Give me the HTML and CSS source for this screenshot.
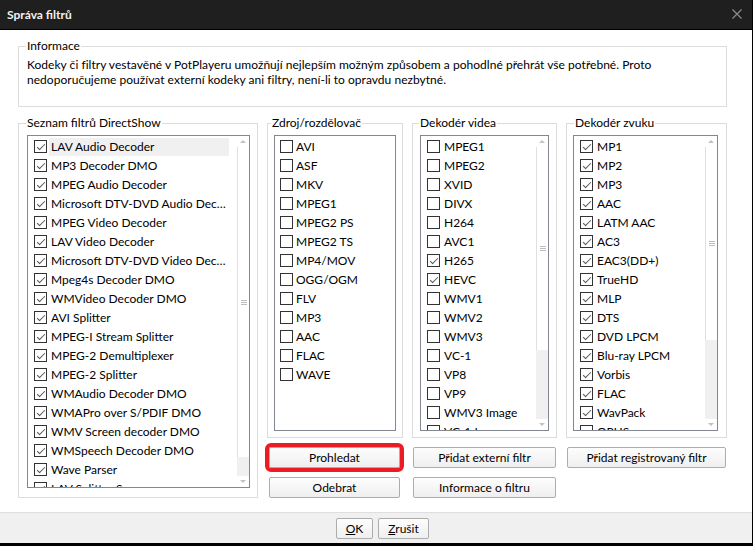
FILE: index.html
```html
<!DOCTYPE html>
<html lang="cs">
<head>
<meta charset="utf-8">
<title>Správa filtrů</title>
<link rel="stylesheet" href="styles.css">
</head>
<body>
<div class="window">
  <header class="titlebar">
    <span class="title">Správa filtrů</span>
    <svg class="close" width="10" height="10" viewBox="0 0 10 10"><path d="M0.5 0.5 L9.5 9.5 M9.5 0.5 L0.5 9.5" stroke="#8c8c8c" stroke-width="1.2" fill="none"/></svg>
  </header>
  <main class="content">
    <fieldset class="group info">
      <legend>Informace</legend>
      <p class="info-text">Kodeky či filtry vestavěné v PotPlayeru umožňují nejlepším možným způsobem a pohodlné přehrát vše potřebné. Proto<br>nedoporučujeme používat externí kodeky ani filtry, není-li to opravdu nezbytné.</p>
    </fieldset>

    <div class="main">
      <fieldset class="group ds">
        <legend>Seznam filtrů DirectShow</legend>
        <div class="listbox lb-ds">
          <ul class="items">
            <li class="sel"><span class="cb on"></span><span class="txt">LAV Audio Decoder</span></li>
            <li><span class="cb on"></span><span class="txt">MP3 Decoder DMO</span></li>
            <li><span class="cb on"></span><span class="txt">MPEG Audio Decoder</span></li>
            <li><span class="cb on"></span><span class="txt">Microsoft DTV-DVD Audio Decoder</span></li>
            <li><span class="cb on"></span><span class="txt">MPEG Video Decoder</span></li>
            <li><span class="cb on"></span><span class="txt">LAV Video Decoder</span></li>
            <li><span class="cb on"></span><span class="txt">Microsoft DTV-DVD Video Decoder</span></li>
            <li><span class="cb on"></span><span class="txt">Mpeg4s Decoder DMO</span></li>
            <li><span class="cb on"></span><span class="txt">WMVideo Decoder DMO</span></li>
            <li><span class="cb on"></span><span class="txt">AVI Splitter</span></li>
            <li><span class="cb on"></span><span class="txt">MPEG-I Stream Splitter</span></li>
            <li><span class="cb on"></span><span class="txt">MPEG-2 Demultiplexer</span></li>
            <li><span class="cb on"></span><span class="txt">MPEG-2 Splitter</span></li>
            <li><span class="cb on"></span><span class="txt">WMAudio Decoder DMO</span></li>
            <li><span class="cb on"></span><span class="txt">WMAPro over S/PDIF DMO</span></li>
            <li><span class="cb on"></span><span class="txt">WMV Screen decoder DMO</span></li>
            <li><span class="cb on"></span><span class="txt">WMSpeech Decoder DMO</span></li>
            <li><span class="cb on"></span><span class="txt">Wave Parser</span></li>
            <li><span class="cb on"></span><span class="txt">LAV Splitter Source</span></li>
          </ul>
          <div class="sb">
            <span class="sb-btn up"></span>
            <span class="thumb" style="height:310px"><i></i></span>
            <span class="track"></span>
            <span class="sb-btn down"></span>
          </div>
        </div>
      </fieldset>

      <div class="right">
        <div class="cols">
          <fieldset class="group src">
            <legend>Zdroj/rozdělovač</legend>
            <div class="listbox">
              <ul class="items">
                <li><span class="cb"></span><span class="txt">AVI</span></li>
                <li><span class="cb"></span><span class="txt">ASF</span></li>
                <li><span class="cb"></span><span class="txt">MKV</span></li>
                <li><span class="cb"></span><span class="txt">MPEG1</span></li>
                <li><span class="cb"></span><span class="txt">MPEG2 PS</span></li>
                <li><span class="cb"></span><span class="txt">MPEG2 TS</span></li>
                <li><span class="cb"></span><span class="txt">MP4/MOV</span></li>
                <li><span class="cb"></span><span class="txt">OGG/OGM</span></li>
                <li><span class="cb"></span><span class="txt">FLV</span></li>
                <li><span class="cb"></span><span class="txt">MP3</span></li>
                <li><span class="cb"></span><span class="txt">AAC</span></li>
                <li><span class="cb"></span><span class="txt">FLAC</span></li>
                <li><span class="cb"></span><span class="txt">WAVE</span></li>
              </ul>
            </div>
          </fieldset>

          <fieldset class="group vid">
            <legend>Dekodér videa</legend>
            <div class="listbox">
              <ul class="items">
                <li><span class="cb"></span><span class="txt">MPEG1</span></li>
                <li><span class="cb"></span><span class="txt">MPEG2</span></li>
                <li><span class="cb"></span><span class="txt">XVID</span></li>
                <li><span class="cb"></span><span class="txt">DIVX</span></li>
                <li><span class="cb"></span><span class="txt">H264</span></li>
                <li><span class="cb"></span><span class="txt">AVC1</span></li>
                <li><span class="cb on"></span><span class="txt">H265</span></li>
                <li><span class="cb on"></span><span class="txt">HEVC</span></li>
                <li><span class="cb"></span><span class="txt">WMV1</span></li>
                <li><span class="cb"></span><span class="txt">WMV2</span></li>
                <li><span class="cb"></span><span class="txt">WMV3</span></li>
                <li><span class="cb"></span><span class="txt">VC-1</span></li>
                <li><span class="cb"></span><span class="txt">VP8</span></li>
                <li><span class="cb"></span><span class="txt">VP9</span></li>
                <li><span class="cb"></span><span class="txt">WMV3 Image</span></li>
                <li><span class="cb"></span><span class="txt">VC-1 Image</span></li>
              </ul>
              <div class="sb">
                <span class="sb-btn up"></span>
                <span class="thumb" style="height:203px"><i></i></span>
                <span class="track"></span>
                <span class="sb-btn down"></span>
              </div>
            </div>
          </fieldset>

          <fieldset class="group aud">
            <legend>Dekodér zvuku</legend>
            <div class="listbox">
              <ul class="items">
                <li><span class="cb on"></span><span class="txt">MP1</span></li>
                <li><span class="cb on"></span><span class="txt">MP2</span></li>
                <li><span class="cb on"></span><span class="txt">MP3</span></li>
                <li><span class="cb on"></span><span class="txt">AAC</span></li>
                <li><span class="cb on"></span><span class="txt">LATM AAC</span></li>
                <li><span class="cb on"></span><span class="txt">AC3</span></li>
                <li><span class="cb on"></span><span class="txt">EAC3(DD+)</span></li>
                <li><span class="cb on"></span><span class="txt">TrueHD</span></li>
                <li><span class="cb on"></span><span class="txt">MLP</span></li>
                <li><span class="cb on"></span><span class="txt">DTS</span></li>
                <li><span class="cb on"></span><span class="txt">DVD LPCM</span></li>
                <li><span class="cb on"></span><span class="txt">Blu-ray LPCM</span></li>
                <li><span class="cb on"></span><span class="txt">Vorbis</span></li>
                <li><span class="cb on"></span><span class="txt">FLAC</span></li>
                <li><span class="cb on"></span><span class="txt">WavPack</span></li>
                <li><span class="cb"></span><span class="txt">OPUS</span></li>
              </ul>
              <div class="sb">
                <span class="sb-btn up"></span>
                <span class="thumb" style="height:193px"><i></i></span>
                <span class="track"></span>
                <span class="sb-btn down"></span>
              </div>
            </div>
          </fieldset>
        </div>

        <div class="buttons">
          <button class="btn c1 marked">Prohledat</button>
          <button class="btn">Přidat externí filtr</button>
          <button class="btn">Přidat registrovaný filtr</button>
          <button class="btn c1">Odebrat</button>
          <button class="btn">Informace o filtru</button>
        </div>
      </div>
    </div>
  </main>
  <footer class="footer">
    <button class="btn ok"><u>O</u>K</button>
    <button class="btn cancel"><u>Z</u>rušit</button>
  </footer>
</div>
</body>
</html>
```

FILE: styles.css
```css
* { box-sizing: border-box; }
html, body { margin: 0; padding: 0; background: #000; }
body {
  font-family: Lato, "Noto Sans", sans-serif;
  font-size: 12px;
  color: #000;
}
.window {
  width: 752px;
  height: 543px;
  background: #fff;
  display: flex;
  flex-direction: column;
}
.titlebar {
  height: 30px;
  background: #1f1f1f;
  border-bottom: 1px solid #000;
  display: flex;
  align-items: center;
  justify-content: space-between;
  padding: 0 10px 1px 7px;
}
.title { color: #f2f2f2; font-weight: bold; font-size: 12px; }
.close { display: block; }

.content {
  flex: 1;
  padding: 9px 0 0 18px;
}
.group {
  margin: 0;
  border: 1px solid #dcdcdc;
  min-width: 0;
}
.group legend {
  padding: 0 1px;
  line-height: 14px;
  margin-left: -1px;
}
.info {
  width: 709px;
  padding: 4px 8px 19px 8px;
}
.info-text { margin: 0; line-height: 15px; white-space: nowrap; letter-spacing: 0.03px; }

.main {
  display: flex;
  gap: 9px;
  margin-top: 9px;
}
.ds { width: 240px; padding: 5px 7px 9px 8px; }
.ds .listbox { height: 353px; }

.right { width: 460px; display: flex; flex-direction: column; gap: 9px; }
.cols {
  display: grid;
  grid-template-columns: 136px 145px 161px;
  gap: 9px;
}
.cols .group { padding: 5px 6px 6px 6px; }
.cols .listbox { height: 296px; }
.src legend { margin-left: -3px; }
.src .items li { padding-left: 5px; }
.src .txt { margin-left: 1px; }
.vid { padding-left: 7px !important; padding-right: 7px !important; }
.aud { padding-right: 8px !important; }
.aud legend { margin-left: 1px; }

.listbox {
  border: 1px solid #828790;
  background: #fff;
  display: flex;
  overflow: hidden;
}
.items {
  list-style: none;
  margin: 0;
  padding: 1px 0 0 0;
  flex: 1;
  min-width: 0;
  overflow: hidden;
}
.items li {
  height: 19px;
  display: flex;
  align-items: center;
  padding-left: 6px;
  white-space: nowrap;
}
.cb {
  flex: none;
  width: 13px;
  height: 13px;
  border: 1px solid #333;
  background: #fff;
  position: relative;
}
.cb.on::after {
  content: "";
  position: absolute;
  left: 4px;
  top: 1px;
  width: 3px;
  height: 7px;
  border: solid #555;
  border-width: 0 1px 1px 0;
  transform: rotate(45deg);
}
.txt {
  margin-left: 2px;
  padding-left: 2px;
  line-height: 18px;
  overflow: hidden;
  text-overflow: ellipsis;
  flex: 1;
  min-width: 0;
  margin-right: 8px;
}
.sel .txt { background: #f0f0f0; }

.sb {
  flex: none;
  width: 12px;
  display: flex;
  flex-direction: column;
  background: #f0f0f0;
}
.sb-btn {
  height: 11px;
  flex: none;
  display: flex;
  align-items: center;
  justify-content: center;
  background: #fff;
}
.sb-btn.up::before {
  content: "";
  border-left: 3px solid transparent;
  border-right: 3px solid transparent;
  border-bottom: 3px solid #c2c2c2;
}
.sb-btn.down::before {
  content: "";
  border-left: 3px solid transparent;
  border-right: 3px solid transparent;
  border-top: 3px solid #c2c2c2;
}
.thumb {
  flex: none;
  background: #fff;
  border-left: 1px solid #e0e0e0;
  display: flex;
  align-items: center;
  justify-content: center;
}
.thumb i {
  width: 6px;
  height: 5px;
  border-top: 1px solid #bdbdbd;
  border-bottom: 1px solid #bdbdbd;
  background: linear-gradient(#bdbdbd, #bdbdbd) center / 100% 1px no-repeat;
}
.track { flex: 1; }

.buttons {
  display: grid;
  grid-template-columns: 136px 145px 161px;
  grid-auto-rows: 21px;
  gap: 9px;
}
.btn {
  font: inherit;
  color: #000;
  height: 21px;
  padding: 0;
  background: linear-gradient(#fdfdfd, #efefef);
  border: 1px solid #adadad;
  border-radius: 2px;
}
.buttons .btn { margin: 0 1px; }
.buttons .c1 { margin: 0 3px 0 2px; }
.marked { outline: 4px solid #ec1c24; outline-offset: 0; }

.footer {
  height: 31px;
  border-top: 1px solid #dfdfdf;
  background: #f0f0f0;
  display: flex;
  align-items: center;
  justify-content: center;
  gap: 5px;
  padding-left: 13px;
}
.ok { width: 37px; }
.cancel { width: 51px; }
.footer u { text-decoration-thickness: 1px; text-underline-offset: 1px; }
```
